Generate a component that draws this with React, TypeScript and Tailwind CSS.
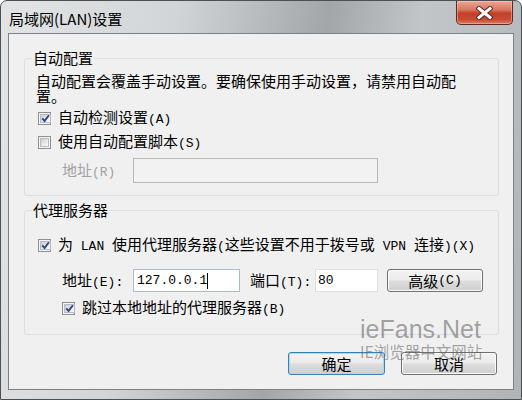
import React from "react";

function T({ s }: { s: string }) {
  const parts = s.match(/[\x00-\x7f]+|[^\x00-\x7f]+/g) || [];
  return (
    <>
      {parts.map((p, i) =>
        /^[\x00-\x7f]/.test(p) ? (
          <span key={i} className="font-[family-name:'Liberation_Mono',monospace] text-[13px] whitespace-pre">
            {p}
          </span>
        ) : (
          <span key={i}>{p}</span>
        )
      )}
    </>
  );
}

function Check({ checked }: { checked?: boolean }) {
  return (
    <span className="w-[13px] h-[13px] border border-[#8e8f8f] bg-[#f6f6f6] p-[1px] shrink-0 flex">
      <span className="flex-1 border border-[#b8bcc2] bg-[linear-gradient(135deg,#c9cdd3,#eef0f2_70%,#fafafa)] flex items-center justify-center">
        {checked && (
          <svg width="9" height="9" viewBox="0 0 9 9" className="block">
            <path d="M1.2 4.3 L3.6 6.9 L7.9 1.2" stroke="#2f4b86" strokeWidth="1.9" fill="none" />
          </svg>
        )}
      </span>
    </span>
  );
}

function Btn({ label, def, w }: { label: string; def?: boolean; w: string }) {
  return (
    <div
      className={
        "h-[23px] rounded-[3px] border flex items-center justify-center text-[15px] leading-[16px] text-black bg-[linear-gradient(#f3f3f3_0%,#ebebeb_48%,#dddddd_52%,#cfcfcf_100%)] " +
        w +
        (def
          ? " border-[#3c7fb1] shadow-[inset_0_0_0_1px_#a6dbf5]"
          : " border-[#707070] shadow-[inset_0_0_0_1px_#fbfbfb]")
      }
    >
      <T s={label} />
    </div>
  );
}

export default function App() {
  return (
    <div className="w-[522px] h-[400px] flex flex-col rounded-t-[7px] border border-[#4c5054] overflow-hidden bg-[linear-gradient(100deg,#e2e4e5_0%,#d2d5d7_30%,#a2a6a9_56%,#c3c6c8_72%,#b0b4b7_100%)] font-[family-name:'Noto_Sans_CJK_SC',sans-serif] text-black">
      <div className="h-[32px] shrink-0 flex items-start justify-between">
        <div className="pl-[8px] pt-[10px] text-[15px] leading-[16px]">局域网(LAN)设置</div>
        <div className="mr-[8px] w-[57px] h-[24px] rounded-b-[5px] border border-t-0 border-[#5b2a22] bg-[linear-gradient(#eaa898_0%,#d8735c_40%,#c4402a_52%,#c64a31_80%,#de7a5c_100%)] shadow-[inset_0_0_0_1px_rgba(255,210,200,0.45)] flex items-center justify-center">
          <svg width="17" height="14" viewBox="0 0 17 14" className="block">
            <path d="M3 2.5 L14 11.5 M14 2.5 L3 11.5" stroke="#5a2a24" strokeWidth="5" strokeLinecap="square" fill="none" />
            <path d="M3 2.5 L14 11.5 M14 2.5 L3 11.5" stroke="#ffffff" strokeWidth="3" strokeLinecap="square" fill="none" />
          </svg>
        </div>
      </div>

      <div className="flex-1 mx-[7px] mb-[9px] border border-[#7d8185] bg-[#f0f0f0] relative flex flex-col pl-[15px] text-[15px] leading-[15px]">
        <fieldset className="mt-[15px] w-[475px] h-[147px] border border-[#d5dfe5] rounded-[3px]">
          <legend className="ml-[7px] px-[1px] text-[15px] leading-[18px]">自动配置</legend>
          <p className="ml-[11px] mt-[6px] leading-[15px] whitespace-nowrap">
            自动配置会覆盖手动设置。要确保使用手动设置，请禁用自动配
            <br />
            置。
          </p>
          <div className="mt-[5px] ml-[13px] h-[20px] flex items-center gap-[7px]">
            <Check checked />
            <span>
              <T s="自动检测设置(A)" />
            </span>
          </div>
          <div className="mt-[4px] ml-[13px] h-[20px] flex items-center gap-[7px]">
            <Check />
            <span>
              <T s="使用自动配置脚本(S)" />
            </span>
          </div>
          <div className="mt-[6px] ml-[37px] h-[25px] flex items-center">
            <span className="w-[71px] text-[#a2a2a2]">
              <T s="地址(R)" />
            </span>
            <div className="w-[245px] h-[25px] border border-[#b9b9b9] bg-[#f2f2f2]" />
          </div>
        </fieldset>

        <fieldset className="mt-[5px] w-[475px] h-[134px] border border-[#d5dfe5] rounded-[3px]">
          <legend className="ml-[7px] px-[1px] text-[15px] leading-[18px]">代理服务器</legend>
          <div className="mt-[16px] ml-[13px] h-[20px] flex items-center gap-[7px]">
            <Check checked />
            <span>
              <T s="为 LAN 使用代理服务器(这些设置不用于拨号或 VPN 连接)(X)" />
            </span>
          </div>
          <div className="mt-[14px] ml-[37px] h-[23px] flex items-center">
            <span className="w-[71px]">
              <T s="地址(E): " />
            </span>
            <div className="w-[107px] h-[23px] border border-[#a9bcd3] bg-white flex items-center pl-[3px]">
              <span className="font-[family-name:'Liberation_Mono',monospace] text-[13px] leading-[15px]">127.0.0.1</span>
              <span className="w-px h-[16px] bg-black" />
            </div>
            <span className="ml-[10px] w-[65px]">
              <T s="端口(T):" />
            </span>
            <div className="w-[63px] h-[23px] border border-[#dcdfe3] bg-white flex items-center pl-[2px]">
              <span className="font-[family-name:'Liberation_Mono',monospace] text-[13px] leading-[15px]">80</span>
            </div>
            <div className="ml-[9px]">
              <Btn label="高级(C)" w="w-[96px]" />
            </div>
          </div>
          <div className="mt-[6px] ml-[37px] h-[20px] flex items-center gap-[7px]">
            <Check checked />
            <span>
              <T s="跳过本地地址的代理服务器(B)" />
            </span>
          </div>
        </fieldset>

        <div className="mt-[17px] ml-[264px] flex gap-[16px]">
          <Btn label="确定" def w="w-[97px]" />
          <Btn label="取消" w="w-[96px]" />
        </div>

        <div className="absolute left-[351px] top-[283px] flex flex-col text-[#5c5c5c]/55 pointer-events-none">
          <span className="font-[family-name:'Liberation_Sans',sans-serif] text-[25px] leading-[25px]">ieFans.Net</span>
          <span className="mt-[1px] text-[15.5px] leading-[17px] whitespace-nowrap">IE浏览器中文网站</span>
        </div>
      </div>
    </div>
  );
}
